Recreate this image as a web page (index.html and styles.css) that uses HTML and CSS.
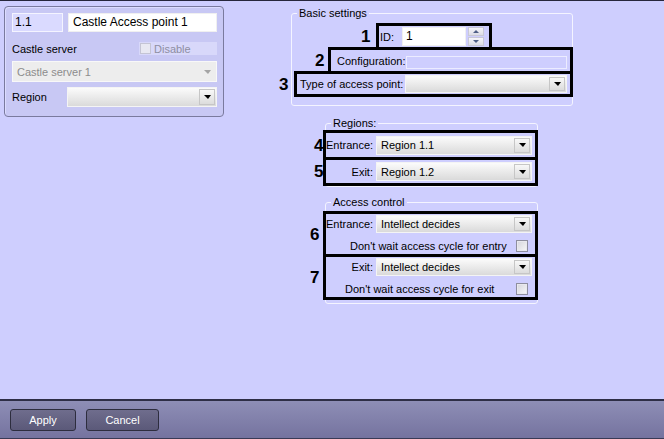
FILE: index.html
```html
<!DOCTYPE html>
<html lang="en">
<head>
    <meta charset="UTF-8">
    <title>Castle Access point settings</title>
    <link rel="stylesheet" href="styles.css">
</head>
<body>
    <div class="app">
        <div class="main">
            <div class="side">
                <div class="top-row">
                    <div class="code-field">1.1</div>
                    <div class="name-field">Castle Access point 1</div>
                </div>
                <div class="server-row">
                    <span>Castle server</span>
                    <label class="disable"><span class="check off"></span>Disable</label>
                </div>
                <div class="select off server-select">
                    <span class="val">Castle server 1</span>
                    <span class="drop"><i class="arrow"></i></span>
                </div>
                <div class="region-row">
                    <span>Region</span>
                    <div class="select region-select">
                        <span class="val"></span>
                        <span class="drop"><i class="arrow"></i></span>
                    </div>
                </div>
            </div>

            <div class="settings">
                <fieldset class="group basic">
                    <legend>Basic settings</legend>
                    <div class="mark mark-id">
                        <b class="num n1">1</b>
                        <span>ID:</span>
                        <div class="id-field">1</div>
                        <div class="spin">
                            <span><i class="up"></i></span>
                            <span><i class="down"></i></span>
                        </div>
                    </div>
                    <div class="mark mark-conf">
                        <b class="num n2">2</b>
                        <span>Configuration:</span>
                        <div class="conf-field"></div>
                    </div>
                    <div class="mark mark-type">
                        <b class="num n3">3</b>
                        <span>Type of access point:</span>
                        <div class="select type-select">
                            <span class="val"></span>
                            <span class="drop"><i class="arrow"></i></span>
                        </div>
                    </div>
                </fieldset>

                <fieldset class="group regions">
                    <legend>Regions:</legend>
                    <div class="mark mark-row first">
                        <b class="num n4">4</b>
                        <span class="lbl">Entrance:</span>
                        <div class="select wide">
                            <span class="val">Region 1.1</span>
                            <span class="drop"><i class="arrow"></i></span>
                        </div>
                    </div>
                    <div class="mark mark-row second">
                        <b class="num n4">5</b>
                        <span class="lbl">Exit:</span>
                        <div class="select wide">
                            <span class="val">Region 1.2</span>
                            <span class="drop"><i class="arrow"></i></span>
                        </div>
                    </div>
                </fieldset>

                <fieldset class="group access">
                    <legend>Access control</legend>
                    <div class="mark mark-block first">
                        <b class="num n6">6</b>
                        <div class="line">
                            <span class="lbl">Entrance:</span>
                            <div class="select wide">
                                <span class="val">Intellect decides</span>
                                <span class="drop"><i class="arrow"></i></span>
                            </div>
                        </div>
                        <div class="check-line entry">
                            <span>Don't wait access cycle for entry</span>
                            <span class="check"></span>
                        </div>
                    </div>
                    <div class="mark mark-block second">
                        <b class="num n6">7</b>
                        <div class="line">
                            <span class="lbl">Exit:</span>
                            <div class="select wide">
                                <span class="val">Intellect decides</span>
                                <span class="drop"><i class="arrow"></i></span>
                            </div>
                        </div>
                        <div class="check-line exit">
                            <span>Don't wait access cycle for exit</span>
                            <span class="check"></span>
                        </div>
                    </div>
                </fieldset>
            </div>
        </div>

        <div class="footer">
            <button class="btn apply">Apply</button>
            <button class="btn cancel">Cancel</button>
        </div>
    </div>
</body>
</html>
```

FILE: styles.css
```css
* {
    box-sizing: border-box;
}
body {
    margin: 0;
    font-family: "Liberation Sans", Arial, sans-serif;
    font-size: 11px;
    color: #000;
    background: #cecefe;
}
.app {
    height: 439px;
    display: flex;
    flex-direction: column;
    border-top: 1px solid #26263c;
    overflow: hidden;
}
.main {
    flex: 1;
    display: flex;
    align-items: flex-start;
}

/* left panel */
.side {
    width: 220px;
    height: 111px;
    margin: 5px 0 0 4px;
    padding: 6px 6px 0 7px;
    background: #c8c8f4;
    border: 1px solid #7a7a9e;
    border-radius: 4px;
    box-shadow: inset 1px 1px 0 #dcdcff;
}
.top-row {
    display: flex;
    gap: 5px;
    height: 19px;
}
.code-field {
    width: 51px;
    background: #dadaff;
    border: 1px solid #f4f4ff;
    padding-left: 2px;
    font-size: 12px;
    line-height: 17px;
}
.name-field {
    flex: 1;
    background: #fff;
    border: 1px solid #f0f0f0;
    padding-left: 4px;
    font-size: 12px;
    line-height: 17px;
}
.server-row {
    margin-top: 10px;
    height: 13px;
    display: flex;
    justify-content: space-between;
    align-items: center;
}
.disable {
    width: 78px;
    height: 13px;
    background: #d8d8fa;
    display: flex;
    align-items: center;
    gap: 3px;
    padding-left: 1px;
    color: #8e8ea2;
}
.server-select {
    margin-top: 6px;
    height: 21px;
}
.region-row {
    margin-top: 5px;
    height: 20px;
    display: flex;
    align-items: center;
    justify-content: space-between;
}
.region-select {
    width: 150px;
    height: 20px;
}

/* selects */
.select {
    display: flex;
    align-items: stretch;
    border: 1px solid #f4f4f4;
    background: linear-gradient(#fbfbfb, #dadada);
    padding: 1px;
}
.select .val {
    flex: 1;
    padding-left: 3px;
    display: flex;
    align-items: center;
    font-size: 11px;
}
.drop {
    width: 16px;
    border: 1px solid #c6c6c6;
    background: linear-gradient(#f8f8f8, #dcdcdc);
    display: flex;
    align-items: center;
    justify-content: center;
}
.arrow {
    width: 0;
    height: 0;
    border-left: 4px solid transparent;
    border-right: 3px solid transparent;
    border-top: 4px solid #000;
}
.select.off {
    background: #ededed;
    border-color: #f8f8f8;
}
.select.off .val {
    color: #8c8c8c;
}
.select.off .drop {
    border: none;
    background: none;
}
.select.off .arrow {
    border-top-color: #a4a4a4;
}

/* checkboxes */
.check {
    width: 12px;
    height: 12px;
    border: 1px solid #8e8e9e;
    background: linear-gradient(135deg, #d4d4dc, #f8f8f8);
    box-shadow: inset 0 0 0 1px #e8e8ee;
}
.check.off {
    width: 11px;
    height: 11px;
    border-color: #c4c4d4;
    background: #e8e8f2;
    box-shadow: none;
}

/* right column */
.settings {
    margin-left: 67px;
}
.group {
    margin: 0;
    padding: 0;
    min-width: 0;
    border: 1px solid #f4f4ff;
    border-radius: 3px;
}
.group legend {
    margin-left: 5px;
    padding: 0 2px;
    line-height: 14px;
    font-size: 11px;
}
.basic {
    width: 282px;
    margin-top: 5px;
}
.regions {
    width: 213px;
    margin: 10px 0 0 34px;
}
.access {
    width: 213px;
    margin: 8px 0 0 34px;
}

/* black highlight frames */
.mark {
    position: relative;
    border: 3px solid #000;
    display: flex;
    align-items: center;
}
.num {
    position: absolute;
    top: 0;
    bottom: 0;
    display: flex;
    align-items: center;
    font-size: 17px;
    font-weight: bold;
    line-height: 1;
}
.n1 { left: -18px; }
.n2 { left: -16px; }
.n3 { left: -18px; }
.n4 { left: -12px; }
.n6 { left: -16px; }

.mark-id {
    margin: 3px 0 0 84px;
    width: 116px;
    height: 27px;
    padding-left: 1px;
}
.id-field {
    width: 64px;
    height: 19px;
    margin-left: 8px;
    background: #fff;
    border: 1px solid #f0f0f0;
    padding-left: 3px;
    font-size: 12px;
    line-height: 17px;
}
.spin {
    width: 16px;
    height: 19px;
    margin-left: 2px;
    display: flex;
    flex-direction: column;
    gap: 1px;
}
.spin span {
    flex: 1;
    border: 1px solid #c8c8d6;
    background: linear-gradient(#f6f6fa, #dcdce6);
    display: flex;
    align-items: center;
    justify-content: center;
}
.spin .up {
    border-left: 3px solid transparent;
    border-right: 3px solid transparent;
    border-bottom: 3px solid #4e5e86;
}
.spin .down {
    border-left: 3px solid transparent;
    border-right: 3px solid transparent;
    border-top: 3px solid #4e5e86;
}
.mark-conf {
    margin: -3px 0 0 36px;
    width: 245px;
    height: 27px;
    padding-left: 6px;
}
.conf-field {
    width: 163px;
    height: 13px;
    margin: 4px 3px 0 auto;
    border: 1px solid #ececff;
    background: #cecefe;
}
.mark-type {
    margin: -3px 0 8px 2px;
    width: 279px;
    height: 26px;
    padding-left: 3px;
}
.type-select {
    width: 162px;
    height: 18px;
    margin: 0 3px 0 auto;
}

.mark-row {
    margin-left: -3px;
    width: 215px;
    padding-right: 3px;
}
.mark-row.first {
    height: 30px;
}
.mark-row.second {
    margin-top: -3px;
    height: 29px;
}
.lbl {
    width: 47px;
    margin-right: 3px;
    text-align: right;
}
.select.wide {
    width: 156px;
    height: 19px;
}

.mark-block {
    margin-left: -3px;
    width: 215px;
    height: 46px;
    padding: 1px 3px 2px 0;
    flex-direction: column;
    align-items: stretch;
}
.mark-block.first {
    margin-top: 2px;
}
.mark-block.second {
    margin: -3px 0 3px -3px;
}
.line {
    display: flex;
    align-items: center;
    height: 18px;
}
.line .select.wide {
    height: 18px;
}
.check-line {
    display: flex;
    align-items: center;
    height: 12px;
    margin-top: 7px;
}
.check-line .check {
    margin: 0 4px 0 auto;
}
.check-line.entry {
    padding-left: 24px;
}
.check-line.exit {
    padding-left: 19px;
}

/* bottom bar */
.footer {
    height: 40px;
    border-top: 2px solid #2e2e46;
    border-bottom: 1px solid #3a3a55;
    background: linear-gradient(#8e8eb6, #75739f);
    display: flex;
    align-items: flex-start;
    gap: 10px;
    padding: 8px 0 0 10px;
}
.btn {
    height: 22px;
    border: 1px solid #2d2d3e;
    border-radius: 3px;
    background: linear-gradient(#6f6d8d, #5b5979);
    color: #fff;
    font-family: "Liberation Sans", Arial, sans-serif;
    font-size: 11px;
    padding: 0;
    cursor: pointer;
}
.btn.apply {
    width: 66px;
}
.btn.cancel {
    width: 73px;
}
```
